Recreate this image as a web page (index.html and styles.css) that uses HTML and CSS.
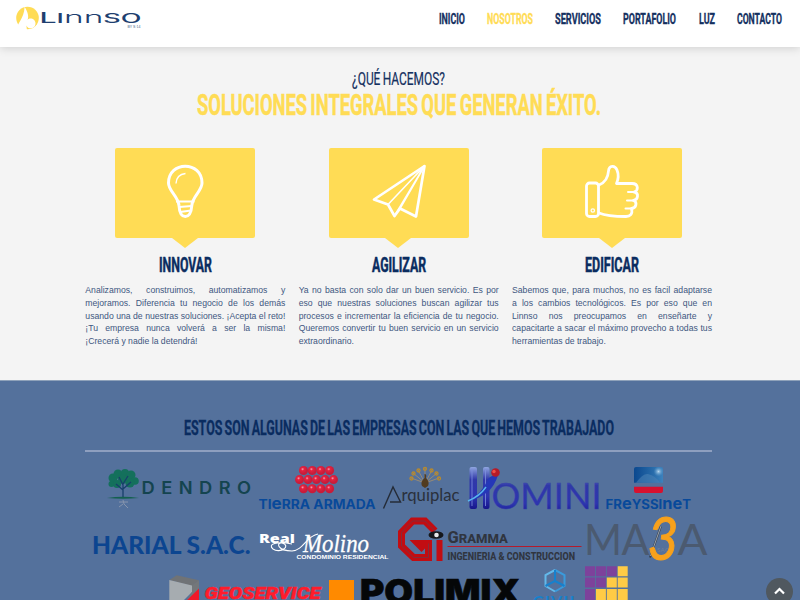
FILE: index.html
```
<!DOCTYPE html>
<html lang="es">
<head>
<meta charset="utf-8">
<title>Linnso</title>
<link rel="stylesheet" href="styles.css">
</head>
<body>
<header class="top">
  <svg class="brand" width="130" height="26" viewBox="14 4 130 26">
    <circle cx="28.500" cy="18" r="11.3" fill="#ffdc55"/>
    <path d="M17 31C18 23 25 19 25.600 7C29 12 30 17 28.500 20C31 17 36.500 19 36.500 23.500C36.500 29 29 30 27.500 25.500C27.500 28 28 29 28 31Z" fill="#fff"/>
    <text class="wordmark" x="40.500" y="23" textLength="102" lengthAdjust="spacingAndGlyphs"><tspan font-size="14">L</tspan>I<tspan class="round">nn</tspan>SO</text>
    <text class="tagline" x="128.500" y="28" textLength="13" lengthAdjust="spacingAndGlyphs">BY S·14</text>
  </svg>
  <nav class="menu narrow">
    <a><svg width="28" height="22"><text x="1.670" y="17" textLength="43.300" lengthAdjust="spacingAndGlyphs">INICIO</text></svg></a>
    <a class="active"><svg width="48" height="22"><text x="1.670" y="17" textLength="76.700" lengthAdjust="spacingAndGlyphs">NOSOTROS</text></svg></a>
    <a><svg width="48" height="22"><text x="1.670" y="17" textLength="76.700" lengthAdjust="spacingAndGlyphs">SERVICIOS</text></svg></a>
    <a><svg width="55" height="22"><text x="1.670" y="17" textLength="88.300" lengthAdjust="spacingAndGlyphs">PORTAFOLIO</text></svg></a>
    <a><svg width="18" height="22"><text x="1.670" y="17" textLength="26.700" lengthAdjust="spacingAndGlyphs">LUZ</text></svg></a>
    <a><svg width="47" height="22"><text x="1.670" y="17" textLength="75" lengthAdjust="spacingAndGlyphs">CONTACTO</text></svg></a>
  </nav>
</header>
<main class="about">
  <h2 class="kicker"><svg width="97" height="24"><text x="2" y="18" textLength="93" lengthAdjust="spacingAndGlyphs">¿QUÉ HACEMOS?</text></svg></h2>
  <h1 class="headline narrow"><svg width="410" height="34"><text x="5" y="24" textLength="673.300" lengthAdjust="spacingAndGlyphs">SOLUCIONES INTEGRALES QUE GENERAN ÉXITO.</text></svg></h1>
  <div class="columns">
    <article class="column">
      <div class="tile">
        <svg width="60" height="60" viewBox="155 162 60 60" fill="none" stroke="#fff" stroke-width="3">
          <path d="M179 205.500C178 196 168.500 191 168.500 183C168.500 160.500 202 160.500 202 183C202 191 192.500 196 191.800 205.500Q191 216.500 185.300 216.500Q179.600 216.500 179 205.500"/>
          <path d="M176 201.500H194.500M179 207L192 206M180 212L191 210.500" stroke-width="2"/>
          <path d="M176 183.500Q176.500 174.500 185.500 173.500" stroke-width="1.400"/>
        </svg>
      </div>
      <h3><svg width="55" height="22"><text x="1" y="18" textLength="53" lengthAdjust="spacingAndGlyphs">INNOVAR</text></svg></h3>
      <p>Analizamos, construimos, automatizamos y mejoramos. Diferencia tu negocio de los demás usando una de nuestras soluciones. ¡Acepta el reto! ¡Tu empresa nunca volverá a ser la misma! ¡Crecerá y nadie la detendrá!</p>
    </article>
    <article class="column">
      <div class="tile">
        <svg width="60" height="60" viewBox="368.500 162 60 60" fill="none" stroke="#fff" stroke-width="2.700" stroke-linejoin="round">
          <path d="M424 166L373.500 199.500L387.500 204.500L394 216L399.500 208.500L415.500 216.500Z"/>
          <path d="M424 166L387.500 204.500M424 166L394 216M424 166L399.500 208.500" stroke-width="1.600"/>
        </svg>
      </div>
      <h3><svg width="56" height="22"><text x="1" y="18" textLength="54" lengthAdjust="spacingAndGlyphs">AGILIZAR</text></svg></h3>
      <p>Ya no basta con solo dar un buen servicio. Es por eso que nuestras soluciones buscan agilizar tus procesos e incrementar la eficiencia de tu negocio. Queremos convertir tu buen servicio en un servicio extraordinario.</p>
    </article>
    <article class="column">
      <div class="tile">
        <svg width="60" height="60" viewBox="582 162 60 60" fill="none" stroke="#fff" stroke-width="2.800" stroke-linejoin="round" stroke-linecap="round">
          <rect x="586.500" y="183" width="12" height="33.500" rx="3"/>
          <circle cx="592.800" cy="210.500" r="1.700" stroke-width="1.300"/>
          <path d="M599 185C604 183 608 178 608.500 171C609 165 615 165 617 170C619 175 618.500 179 616.500 183.500H632C639 183.500 638.500 191 634 192C639.500 193 638 200 633.500 200.500C637.500 202 636.500 208 631.500 208.500C633 214 630 216.500 626 216.500C616 216.500 606 216 599 213"/>
          <path d="M628 192H634M627 200.500H633.500M625.500 208.500H631.500" stroke-width="2"/>
        </svg>
      </div>
      <h3><svg width="56" height="22"><text x="1" y="18" textLength="54" lengthAdjust="spacingAndGlyphs">EDIFICAR</text></svg></h3>
      <p>Sabemos que, para muchos, no es facil adaptarse a los cambios tecnológicos. Es por eso que en Linnso nos preocupamos en enseñarte y capacitarte a sacar el máximo provecho a todas tus herramientas de trabajo.</p>
    </article>
  </div>
</main>
<section class="clients">
  <h2 class="narrow"><svg width="436" height="28"><text x="5" y="20" textLength="716.700" lengthAdjust="spacingAndGlyphs">ESTOS SON ALGUNAS DE LAS EMPRESAS CON LAS QUE HEMOS TRABAJADO</text></svg></h2>
  <div class="logos">
    <svg width="152" height="50" viewBox="103 463 152 50">
      <g fill="#14705c"><circle cx="113" cy="478" r="4.500"/><circle cx="118" cy="474" r="4.500"/><circle cx="125" cy="473" r="4"/><circle cx="131" cy="475" r="4.500"/><circle cx="135" cy="481" r="3.800"/><circle cx="111.500" cy="484" r="3"/><circle cx="117" cy="484" r="4"/><circle cx="130" cy="483" r="4.500"/><circle cx="123" cy="479" r="5"/></g>
      <path d="M123 498V483M123 490L116 484M123 489L131 482M123 485L119 477M123 484L128 476" stroke="#173f6b" stroke-width="1.300" fill="none"/>
      <path d="M107 498Q123 495.500 139 498Q123 499.500 107 498Z" fill="#14604f"/>
      <path d="M119 502H128M123 500L124 504L128 508M123 504L119 507" stroke="#8795ad" fill="none"/>
      <text class="dendro" x="141.500" y="494.300" textLength="116" lengthAdjust="spacingAndGlyphs">DENDRO</text>
    </svg>
    <svg width="124" height="50" viewBox="255 463 124 50">
      <defs><radialGradient id="ball" cx=".4" cy=".35"><stop offset="0" stop-color="#f8a0b5"/><stop offset=".35" stop-color="#e5223f"/><stop offset="1" stop-color="#c81c3a"/></radialGradient></defs>
      <g fill="url(#ball)"><circle cx="303.500" cy="470.500" r="4.500"/><circle cx="312.300" cy="470.500" r="4.500"/><circle cx="320.900" cy="470.500" r="4.500"/><circle cx="329.600" cy="470.500" r="4.500"/><circle cx="299.500" cy="479.600" r="4.500"/><circle cx="308" cy="479.600" r="4.500"/><circle cx="316.500" cy="479.600" r="4.500"/><circle cx="325" cy="479.600" r="4.500"/><circle cx="333.500" cy="479.600" r="4.500"/><circle cx="303.500" cy="488.700" r="4.500"/><circle cx="312.300" cy="488.700" r="4.500"/><circle cx="320.900" cy="488.700" r="4.500"/><circle cx="329.600" cy="488.700" r="4.500"/></g>
      <text class="unicase" x="258.500" y="508.600" textLength="117" lengthAdjust="spacingAndGlyphs">TI<tspan font-size="15.500">e</tspan>RRA ARMADA</text>
    </svg>
    <svg width="86" height="50" viewBox="379 463 86 50">
      <g fill="none" stroke="#a8906a" stroke-width=".8"><path d="M425 483L411 478M425 483L413 473M425 483L418 470M425 483V468M425 483L432 470M425 483L437 473M425 483L439 478"/></g>
      <g fill="none" stroke="#b98a2c" stroke-width="1.300"><circle cx="411.500" cy="478.500" r="1.500"/><circle cx="413.500" cy="473.500" r="1.500"/><circle cx="418.500" cy="470.500" r="1.500"/><circle cx="425" cy="468.800" r="1.500"/><circle cx="431.500" cy="470.500" r="1.500"/><circle cx="436.500" cy="473.500" r="1.500"/><circle cx="439" cy="478.500" r="1.500"/></g>
      <path d="M424.500 474Q427 474 426 478Q430 482 428 486L425 488L422 486Q420 482 424.500 478Z" fill="#513b20"/>
      <path d="M383.500 508.500L393 487L400.500 502H390" fill="none" stroke="#252c38" stroke-width="1.400"/>
      <text class="arqui" x="401.500" y="501.200" textLength="58" lengthAdjust="spacingAndGlyphs">rquiplac</text>
    </svg>
    <svg width="138" height="50" viewBox="465 463 138 50">
      <defs><linearGradient id="blue" x2="0" y2="1"><stop offset="0" stop-color="#8fa5e0"/><stop offset=".3" stop-color="#3038a8"/><stop offset=".7" stop-color="#2d35b0"/><stop offset="1" stop-color="#16168c"/></linearGradient></defs>
      <rect x="469.500" y="467" width="7.500" height="42" rx="2" fill="url(#blue)"/><rect x="483" y="467" width="6.500" height="42" rx="2" fill="url(#blue)"/>
      <path d="M472 470V506M485.500 470V506" stroke="#7f91e0" stroke-width=".8"/>
      <path d="M468 501Q482 494 488 479Q491 475 498 475Q492 496 468 501Z" fill="#2537b8"/>
      <path d="M468 501Q480 496 486 487" fill="none" stroke="#58b6ef" stroke-width="1.400"/>
      <circle cx="495.500" cy="472.500" r="4.300" fill="#b51b28"/><circle cx="494" cy="471.500" r="1.700" fill="#f05045"/>
      <text class="homini" x="491.500" y="508.800" textLength="110" lengthAdjust="spacingAndGlyphs">OMINI</text>
    </svg>
    <svg width="92" height="50" viewBox="603 463 92 50">
      <defs><linearGradient id="sky" x2="1" y2="0"><stop offset="0" stop-color="#0b488f"/><stop offset=".55" stop-color="#2265a5"/><stop offset="1" stop-color="#3c82bd"/></linearGradient><radialGradient id="sun"><stop offset="0" stop-color="#b6d6ee"/><stop offset="1" stop-color="#5c98c8" stop-opacity="0"/></radialGradient></defs>
      <path d="M634 482.800V469Q634 467 636 467H661Q663 467 663 469V482.800Z" fill="url(#sky)"/><circle cx="658.500" cy="471.500" r="5" fill="url(#sun)"/>
      <path d="M636 482.800Q643 473 648 474Q656 476 660 482.800Z" fill="#4a80b4" opacity=".6"/>
      <path d="M634 486.800H663V491Q663 493 661 493H636Q634 493 634 491Z" fill="#d7112f"/>
      <text class="unicase" x="605.500" y="508.600" textLength="85.500" lengthAdjust="spacingAndGlyphs">FR<tspan font-size="15.500">e</tspan>YSSI<tspan font-size="15.500">ne</tspan>T</text>
    </svg>
  </div>
  <div class="logos">
    <svg width="168" height="50" viewBox="87 513 168 50"><text class="harial" x="91" y="554" textLength="158.500" lengthAdjust="spacingAndGlyphs">HARIAL S.A.C.</text></svg>
    <svg width="136" height="50" viewBox="255 513 136 50">
      <text class="real" x="258" y="542.500" textLength="36" lengthAdjust="spacingAndGlyphs">Real</text>
      <path d="M291 544C276 541 266 544 272 549C279 554 291 546 281 543C275 542 276 551 291 551C303 550 305 536 317 534" fill="none" stroke="#fff" stroke-width="1.100"/>
      <text class="molino" x="302" y="552" textLength="66" lengthAdjust="spacingAndGlyphs">Molino</text>
      <text class="condo" x="295.500" y="558.900" textLength="92" lengthAdjust="spacingAndGlyphs">CONDOMINIO RESIDENCIAL</text>
    </svg>
    <svg width="193" height="50" viewBox="391 513 193 50">
      <g fill="none"><path d="M434 531L424 521H411.500L400.500 532.500V546L412.500 557.500H427.500V543.500H417L423 549.500" stroke="#c20d12" stroke-width="7"/><path d="M434 531L424 521H411.500L400.500 532.500V546L412.500 557.500H427.500V543.500" stroke="#7d3040" stroke-width=".9"/></g>
      <path d="M438.500 540V561" stroke="#c20d12" stroke-width="6"/>
      <ellipse cx="435" cy="535" rx="7.500" ry="3.800" fill="#15171b"/><circle cx="435.500" cy="535" r="2.300" fill="#e9e9ea"/>
      <text class="gramma" x="446.500" y="543.200" textLength="60.500" lengthAdjust="spacingAndGlyphs"><tspan font-size="17">G</tspan>RAMMA</text>
      <path d="M446.500 546.500H580.500" stroke="#b51b2c" stroke-width="1.200"/>
      <text class="ing" x="446.500" y="559.700" textLength="127.500" lengthAdjust="spacingAndGlyphs">INGENIERIA &amp; CONSTRUCCION</text>
    </svg>
    <svg width="125" height="50" viewBox="584 513 125 50">
      <g class="maba"><text x="583" y="555" textLength="38" lengthAdjust="spacingAndGlyphs">M</text><text x="620.500" y="555" textLength="28" lengthAdjust="spacingAndGlyphs">A</text><text x="676.500" y="555" textLength="30" lengthAdjust="spacingAndGlyphs">A</text></g>
      <text class="sac" x="656" y="552" textLength="12">SAC</text>
      <path d="M660 526L649 557.500" stroke="#343e4b" stroke-width="2"/><path d="M660 526L649.500 556" stroke="#c9ced6" stroke-width=".7"/>
      <text class="three" x="646.500" y="559.500" textLength="31" lengthAdjust="spacingAndGlyphs">3</text>
    </svg>
  </div>
  <div class="logos">
    <svg width="160" height="50" viewBox="165 563 160 50">
      <path d="M169.300 580L176.700 575.200L199 580.300L192 586Z" fill="#707376"/><path d="M169.300 580L192 585.500V592L180 604H169.300Z" fill="#a6acb0"/><path d="M192 585.500L199 580.300V589L186 601L192 592Z" fill="#74777a"/><path d="M199 588.500V604H183Z" fill="#f01928"/>
      <text class="geo" x="204.500" y="599.200" textLength="116" lengthAdjust="spacingAndGlyphs">GEOSERVICE</text>
    </svg>
    <svg width="200" height="50" viewBox="325 563 200 50"><rect x="329" y="580" width="25" height="25" fill="#ff8a00"/><text class="polimix" x="360" y="604" textLength="160.500" lengthAdjust="spacingAndGlyphs">POLIMIX</text></svg>
    <svg width="55" height="50" viewBox="525 563 55 50">
      <g fill="none" stroke-width="2"><path d="M555 570L545.500 575V586L555 591.500" stroke="#63b9ea"/><path d="M555 570L564.500 575V586L555 591.500" stroke="#3a9bdc"/><path d="M555 570V581L545.500 586M555 581L564.500 586" stroke="#1681cd"/></g>
      <text class="civil" x="533" y="606.500" textLength="45" lengthAdjust="spacing">CIVIL</text>
    </svg>
    <svg width="52" height="50" viewBox="580 563 52 50">
      <g fill="#7d429b"><path d="M585 566.200h10v10h-10zM595.900 566.200h10v10h-10zM606.800 566.200h10v10h-10zM585 577.600h10v10h-10zM595.900 577.600h10v10h-10zM585 589h10v12h-10z"/></g>
      <g fill="#ffcb45"><path d="M617.700 566.200h10v10h-10zM606.800 577.600h10v10h-10zM617.700 577.600h10v10h-10zM595.900 589h10v12h-10zM606.800 589h10v12h-10zM617.700 589h10v12h-10z"/></g>
    </svg>
  </div>
</section>
<a class="to-top"><svg width="27" height="27" viewBox="0 0 27 27"><path d="M9 15.500L13.500 11L18 15.500" fill="none" stroke="#fff" stroke-width="2.200"/></svg></a>
</body>
</html>
```
FILE: styles.css
```
* { box-sizing: border-box; }
body { margin: 0; height: 600px; overflow: hidden; display: flex; flex-direction: column; background: #f4f4f4; font-family: "Liberation Sans", sans-serif; color: #0a2c60; }
svg { display: block; overflow: visible; flex: none; }
h1, h2, h3, p { margin: 0; }
.narrow text { transform: scaleX(.6); }

.top { position: relative; flex: none; height: 47px; padding: 4px 17px 0 13px; display: flex; justify-content: space-between; align-items: flex-start; background: #fff; box-shadow: 0 1px 9px rgba(0, 0, 0, .16); }
.wordmark { font: 500 12.500px Inter, sans-serif; fill: #1f3f70; }
.wordmark .round { font-size: 15.500px; font-weight: 300; }
.tagline { font: 4px "Liberation Sans", sans-serif; fill: #465f88; }
.menu { display: flex; gap: 20.300px; padding-top: 3px; }
.menu text { font: 700 15.200px Roboto, sans-serif; fill: #14305f; stroke: #14305f; stroke-width: .35px; }
.menu .active text { fill: #ffdc55; stroke: #ffdc55; }

.about { flex: none; height: 333px; padding: 19.500px 2.700px 0 0; display: flex; flex-direction: column; align-items: center; }
.kicker text { font: 400 17.500px Roboto, sans-serif; fill: #14305f; stroke: #14305f; stroke-width: .2px; word-spacing: -1px; }
.headline text { font: 700 29px Roboto, sans-serif; fill: #ffdc55; stroke: #ffdc55; stroke-width: .5px; word-spacing: -2px; }
.columns { display: flex; gap: 13.330px; width: 626.700px; margin-top: 23.500px; }
.column { flex: 1; display: flex; flex-direction: column; align-items: center; }
.tile { width: 140px; height: 90px; border-radius: 2px; background: #ffdc55; display: flex; justify-content: center; padding-top: 14px; position: relative; }
.tile::after { content: ""; position: absolute; top: 100%; left: 56.500px; border: solid transparent; border-width: 10px 13.500px 0; border-top-color: #ffdc55; }
.column h3 { margin-top: 16px; }
.column h3 text { font: 700 19.700px Roboto, sans-serif; fill: #0a2c60; stroke: #0a2c60; stroke-width: .5px; }
.column p { width: 100%; margin-top: 8.200px; font-size: 8.667px; line-height: 12.667px; text-align: justify; color: #405781; }

.clients { flex: 1; min-height: 0; padding: 33.500px 2.700px 0 0; background: #54719c; border-top: 1px solid #8fa2ba; display: flex; flex-direction: column; align-items: center; }
.clients h2 { width: 627px; height: 37px; flex: none; display: flex; justify-content: center; border-bottom: 2px solid #8e9fbf; margin-bottom: 11.500px; }
.clients h2 text { font: 700 20.400px Roboto, sans-serif; fill: #0a2c60; stroke: #0a2c60; stroke-width: .3px; word-spacing: -1.500px; }
.logos { display: flex; justify-content: center; flex: none; height: 50px; }

.dendro { font: 600 17px Inter, sans-serif; letter-spacing: 6px; fill: #14444f; }
.unicase { font: 700 12.500px Inter, sans-serif; fill: #08499a; }
.arqui { font: 400 18px Lato, sans-serif; fill: #2a303b; }
.homini { font: 400 37px Lato, sans-serif; fill: url(#blue); stroke: #3540a8; stroke-width: .4px; }
.harial { font: 900 25.500px Lato, sans-serif; fill: #0c4590; }
.real { font: 800 13px "Open Sans", sans-serif; fill: #fff; }
.molino { font: italic 400 25px "Liberation Serif", serif; fill: #fff; stroke: #fff; stroke-width: .3px; }
.condo { font: 700 6.200px "Liberation Sans", sans-serif; fill: #fff; }
.gramma { font: 800 13.500px Roboto, sans-serif; fill: #30353f; }
.ing { font: 800 11.300px Roboto, sans-serif; fill: #30353f; }
.maba text { font: 400 43px Lato, sans-serif; fill: #4b5a70; }
.three { font: italic 400 61px Lato, sans-serif; fill: #f8a11b; stroke: #f8a11b; stroke-width: 1px; }
.sac { font: 6px Lato, sans-serif; fill: #71809a; }
.geo { font: italic 900 15.700px Roboto, sans-serif; fill: #ff1c2b; stroke: #ff1c2b; stroke-width: .4px; }
.polimix { font: 900 33.500px Inter, sans-serif; fill: #050708; stroke: #050708; stroke-width: .6px; }
.civil { font: 700 16px Lato, sans-serif; fill: #1681cd; }

.to-top { position: fixed; left: 766px; top: 577.500px; width: 27px; height: 27px; border-radius: 50%; background: #50585f; }
```
